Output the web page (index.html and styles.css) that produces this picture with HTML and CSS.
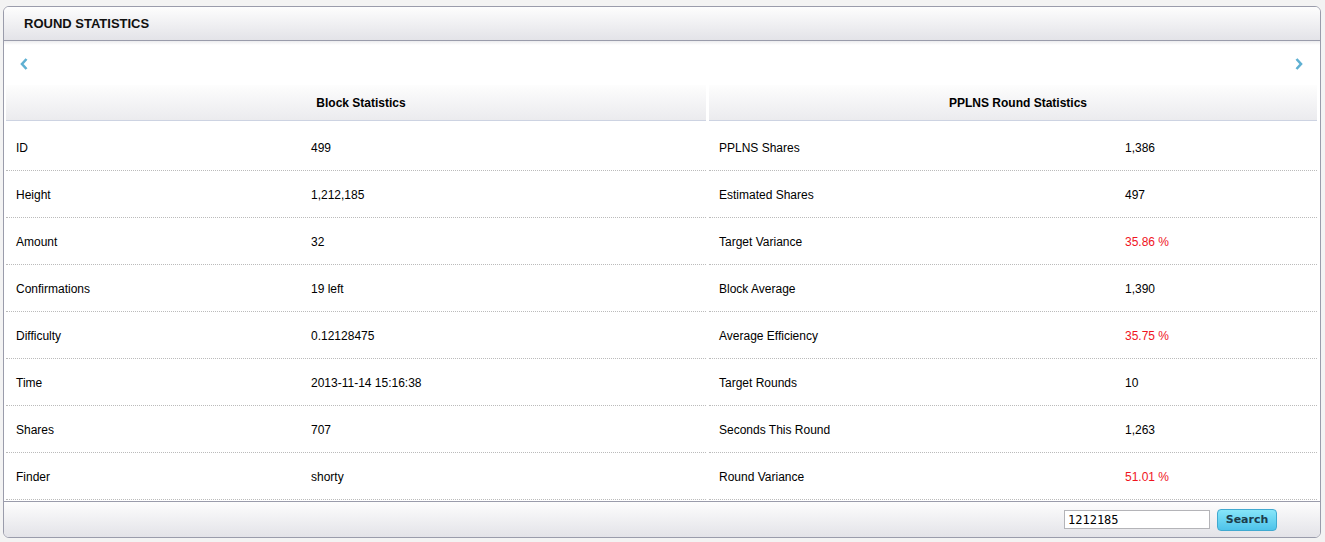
FILE: index.html
```html
<!DOCTYPE html>
<html>
<head>
<meta charset="utf-8">
<link rel="stylesheet" href="styles.css">
</head>
<body>
<div class="panel">
  <div class="panel-header"><h2>ROUND STATISTICS</h2></div>
  <div class="panel-body">
    <div class="nav">
      <svg class="chev" width="10" height="14" viewBox="0 0 10 14"><polyline points="7.5,2 3,7 7.5,12" fill="none" stroke="#5fb0d2" stroke-width="2.6"/></svg>
      <svg class="chev" width="10" height="14" viewBox="0 0 10 14"><polyline points="2.5,2 7,7 2.5,12" fill="none" stroke="#5fb0d2" stroke-width="2.6"/></svg>
    </div>
    <div class="tables">
      <div class="stat-table left">
        <div class="th">Block Statistics</div>
        <div class="rows">
          <div class="row"><span class="k">ID</span><span class="v">499</span></div>
          <div class="row"><span class="k">Height</span><span class="v">1,212,185</span></div>
          <div class="row"><span class="k">Amount</span><span class="v">32</span></div>
          <div class="row"><span class="k">Confirmations</span><span class="v">19 left</span></div>
          <div class="row"><span class="k">Difficulty</span><span class="v">0.12128475</span></div>
          <div class="row"><span class="k">Time</span><span class="v">2013-11-14 15:16:38</span></div>
          <div class="row"><span class="k">Shares</span><span class="v">707</span></div>
          <div class="row"><span class="k">Finder</span><span class="v">shorty</span></div>
        </div>
      </div>
      <div class="stat-table right">
        <div class="th">PPLNS Round Statistics</div>
        <div class="rows">
          <div class="row"><span class="k">PPLNS Shares</span><span class="v">1,386</span></div>
          <div class="row"><span class="k">Estimated Shares</span><span class="v">497</span></div>
          <div class="row"><span class="k">Target Variance</span><span class="v red">35.86 %</span></div>
          <div class="row"><span class="k">Block Average</span><span class="v">1,390</span></div>
          <div class="row"><span class="k">Average Efficiency</span><span class="v red">35.75 %</span></div>
          <div class="row"><span class="k">Target Rounds</span><span class="v">10</span></div>
          <div class="row"><span class="k">Seconds This Round</span><span class="v">1,263</span></div>
          <div class="row"><span class="k">Round Variance</span><span class="v red">51.01 %</span></div>
        </div>
      </div>
    </div>
  </div>
  <div class="panel-footer">
    <input class="search-input" type="text" value="1212185">
    <button class="search-btn">Search</button>
  </div>
</div>
</body>
</html>
```

FILE: styles.css
```css
* { box-sizing: border-box; }
html, body { margin: 0; padding: 0; }
body {
  background: #f3f3f3;
  font-family: "Liberation Sans", Arial, sans-serif;
  font-size: 12px;
  color: #000;
}
.panel {
  margin: 6px 0 0 3px;
  width: 1318px;
  height: 532px;
  border: 1px solid #9a9cab;
  border-radius: 6px;
  background: #fff;
  display: flex;
  flex-direction: column;
  overflow: hidden;
}
.panel-header {
  height: 34px;
  flex: none;
  background: linear-gradient(#fdfdfd, #e3e3e8);
  border-bottom: 1px solid #9a9cab;
  display: flex;
  align-items: center;
  padding-left: 20px;
}
.panel-header h2 {
  margin: 0;
  font-size: 13px;
  font-weight: bold;
  color: #111;
}
.panel-body {
  flex: 1;
  display: flex;
  flex-direction: column;
  background: linear-gradient(#ececee 0, #fff 4px);
}
.nav {
  height: 44px;
  flex: none;
  display: flex;
  justify-content: space-between;
  align-items: center;
  padding: 0 16px 0 15px;
}
.chev { display: block; margin-top: 1px; }
.tables {
  display: flex;
  gap: 3px;
  padding-left: 2px;
}
.stat-table.left { width: 700px; }
.stat-table.right { width: 608px; }
.th {
  height: 36px;
  background: linear-gradient(#fdfdfd, #ebebee);
  border-bottom: 1px solid #cdd3e2;
  font-weight: bold;
  font-size: 12px;
  display: flex;
  align-items: center;
  justify-content: center;
  padding-left: 10px;
  padding-top: 1px;
}
.rows { padding-top: 3px; }
.row {
  height: 47px;
  border-bottom: 1px dotted #bbbbbb;
  display: flex;
  align-items: center;
  padding-top: 1px;
}
.k { padding-left: 10px; }
.left .k { width: 305px; }
.right .k { width: 416px; }
.red { color: #f0141e; }
.panel-footer {
  margin-top: auto;
  height: 36px;
  flex: none;
  border-top: 1px solid #9a9cab;
  background: linear-gradient(#fdfdfd, #e3e3e8);
  display: flex;
  align-items: center;
  justify-content: flex-end;
  padding-right: 43px;
  gap: 7px;
}
.search-input {
  width: 146px;
  height: 19px;
  border: 1px solid #b4b4b8;
  background: #fff;
  font-family: "DejaVu Sans Mono", monospace;
  font-size: 12px;
  padding: 0 3px;
  margin: 0;
  color: #000;
}
.search-btn {
  width: 60px;
  height: 22px;
  border: 1px solid #40a9d0;
  border-radius: 4px;
  background: linear-gradient(#86e6f9, #4ec3ea);
  font-family: "DejaVu Sans", sans-serif;
  font-weight: bold;
  font-size: 11px;
  color: #1c3d4c;
  padding: 0;
  margin: 0;
}
```
